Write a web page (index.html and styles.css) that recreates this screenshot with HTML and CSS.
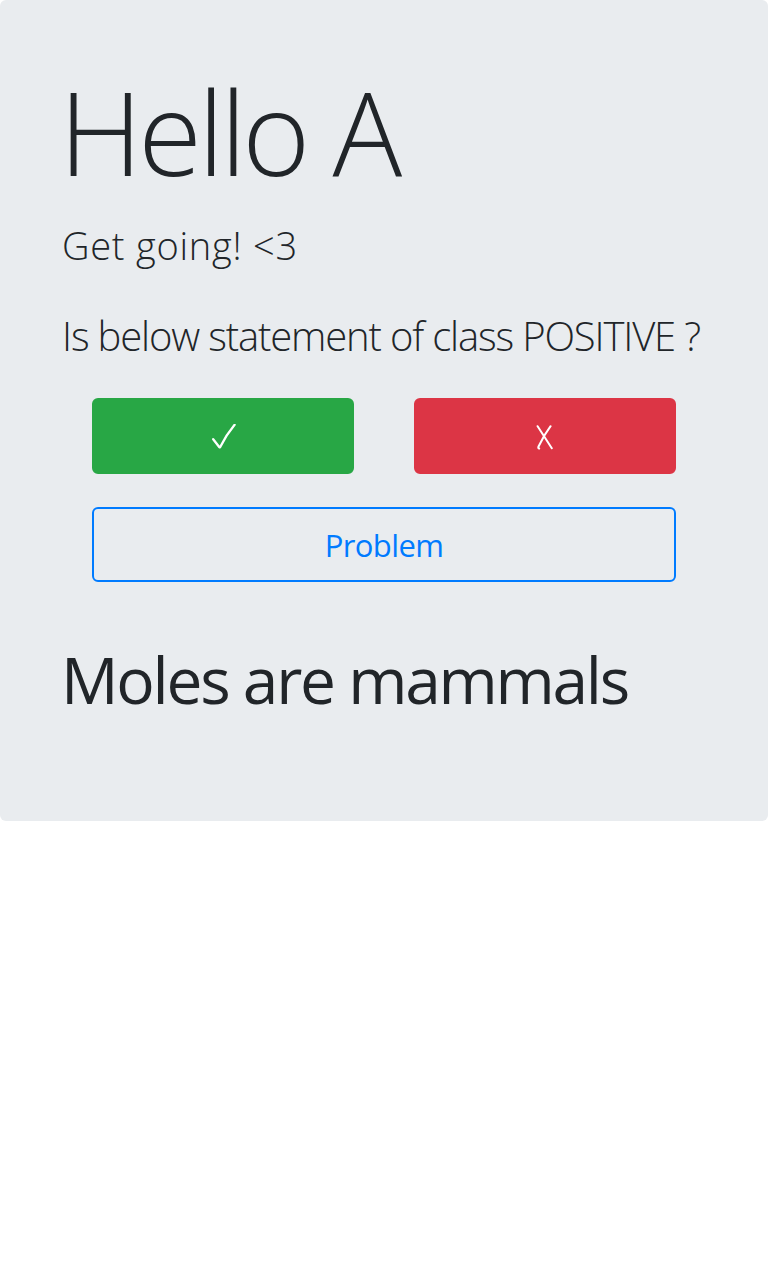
FILE: index.html
```html
<!DOCTYPE html>
<html lang="en">
<head>
<meta charset="utf-8">
<title>Hello A</title>
<link rel="stylesheet" href="styles.css">
</head>
<body>
<div class="jumbotron">
  <h1 class="display">Hello A</h1>
  <p class="lead">Get going! &lt;3</p>
  <p class="question">Is below statement of class POSITIVE ?</p>
  <div class="actions">
    <div class="choice-row">
      <button class="btn btn-success" aria-label="✓">
        <svg class="icon-check" width="24" height="25" viewBox="0 0 24 25" aria-hidden="true">
          <path d="M1.2 15.2 L7.4 23.2 Q7.8 23.6 8.2 23 Q14.5 10.5 22.6 0.8" fill="none" stroke="#ffffff" stroke-width="2.3" stroke-linecap="round" stroke-linejoin="round"/>
        </svg>
      </button>
      <button class="btn btn-danger" aria-label="✗">
        <svg class="icon-cross" width="18" height="25" viewBox="0 0 18 25" aria-hidden="true">
          <path d="M1.6 1.2 L15.8 23.2" fill="none" stroke="#ffffff" stroke-width="2" stroke-linecap="round"/>
          <path d="M14.6 1.2 Q8 10 2.4 21.8 Q2 23.4 3.2 23.6" fill="none" stroke="#ffffff" stroke-width="2" stroke-linecap="round"/>
        </svg>
      </button>
    </div>
    <button class="btn btn-outline">Problem</button>
  </div>
  <h2 class="statement">Moles are mammals</h2>
</div>
</body>
</html>
```
FILE: styles.css
```css
html, body {
  margin: 0;
  padding: 0;
  background: #ffffff;
}
body {
  font-family: "Open Sans", "Noto Sans", sans-serif;
  color: #212529;
}
.jumbotron {
  background: #e9ecef;
  border-radius: 6px;
  padding: 62px 63px 102px 63px;
}
.display {
  font-size: 116px;
  font-weight: 300;
  line-height: 1.2;
  letter-spacing: -0.035em;
  margin: 0 0 16px -4px;
}
.lead {
  font-size: 38px;
  font-weight: 300;
  line-height: 1.5;
  letter-spacing: 0.02em;
  margin: 0 0 32px -1px;
}
.question {
  font-size: 40px;
  font-weight: 300;
  line-height: 1.5;
  letter-spacing: -0.029em;
  margin: 0 0 32px -1px;
}
.actions {
  display: flex;
  flex-direction: column;
  gap: 33px;
  padding: 0 29px;
}
.choice-row {
  display: grid;
  grid-template-columns: 1fr 1fr;
  gap: 60px;
}
.btn {
  font-family: "Open Sans", "DejaVu Sans", sans-serif;
  height: 76px;
  border-radius: 6px;
  border: 2px solid transparent;
  font-size: 31px;
  color: #ffffff;
  cursor: pointer;
  padding: 0;
  display: flex;
  align-items: center;
  justify-content: center;
}
.btn svg {
  display: block;
}
.icon-check {
  margin: 1px 0 0 1px;
}
.icon-cross {
  margin: 2px 0 0 0;
}
.btn-success {
  background: #28a745;
  border-color: #28a745;
}
.btn-danger {
  background: #dc3545;
  border-color: #dc3545;
}
.btn-outline {
  background: transparent;
  border-color: #007bff;
  color: #007bff;
  height: 75px;
  letter-spacing: -0.02em;
  padding-top: 1px;
}
.statement {
  font-size: 64px;
  font-weight: 400;
  line-height: 1.2;
  letter-spacing: -0.035em;
  margin: 60px 0 0 -2px;
}
```
